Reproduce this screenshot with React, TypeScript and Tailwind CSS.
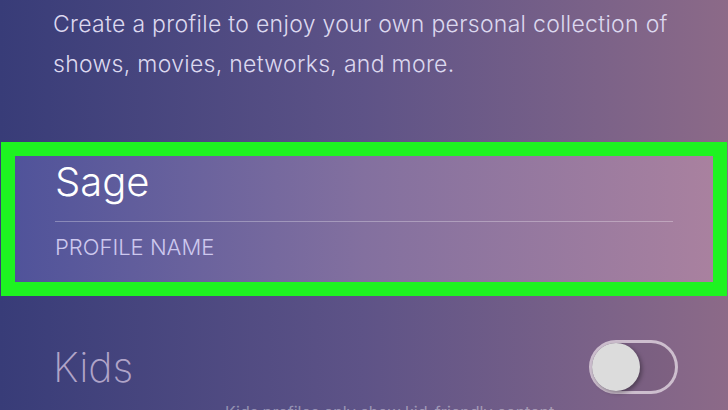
const App = () => {
  return (
    <main
      className="h-[410px] w-[728px] overflow-hidden bg-linear-to-r from-[#383c78] via-[#5e5387] to-[#8c6a88]"
      style={{ fontFamily: "Inter, 'Noto Sans', sans-serif" }}
    >
      {/* intro copy */}
      <p className="px-[53px] pt-[4px] text-[23px] leading-[40px] font-light tracking-[0.3px] text-[#dcd8ef]">
        Create a profile to enjoy your own personal collection of shows, movies, networks, and more.
      </p>

      {/* highlighted name field */}
      <div className="mt-[58px] mx-[1px] border-[14px] border-[#1ef321]">
        <div className="h-[126px] px-[40px] pt-[6px] bg-linear-to-r from-[#50539a] via-[#83709f] to-[#a9819f]">
          <div className="text-[40px] leading-[40px] font-light text-white">Sage</div>
          <div className="mt-[19px] h-px bg-white/30" />
          <div className="mt-[14px] text-[22px] leading-[22px] font-light text-[#cdc8ee]">PROFILE NAME</div>
        </div>
      </div>

      {/* kids toggle */}
      <div className="mt-[44px] flex items-center justify-between pl-[53px] pr-[50px]">
        <span className="text-[41px] leading-[54px] font-extralight text-[#b0a4c8]">Kids</span>
        <div className="relative h-[54px] w-[89px] rounded-full border-[3px] border-[#d6c9d6]/90 bg-black/5">
          <div className="absolute left-[0px] top-[0px] h-[48px] w-[48px] rounded-full bg-[#dcdcdc] shadow-[2px_2px_4px_rgba(0,0,0,0.35)]" />
        </div>
      </div>

      <p className="mt-[8px] pl-[225px] text-[16px] leading-[20px] text-white/40">
        Kids profiles only show kid-friendly content
      </p>
    </main>
  )
}

export default App
